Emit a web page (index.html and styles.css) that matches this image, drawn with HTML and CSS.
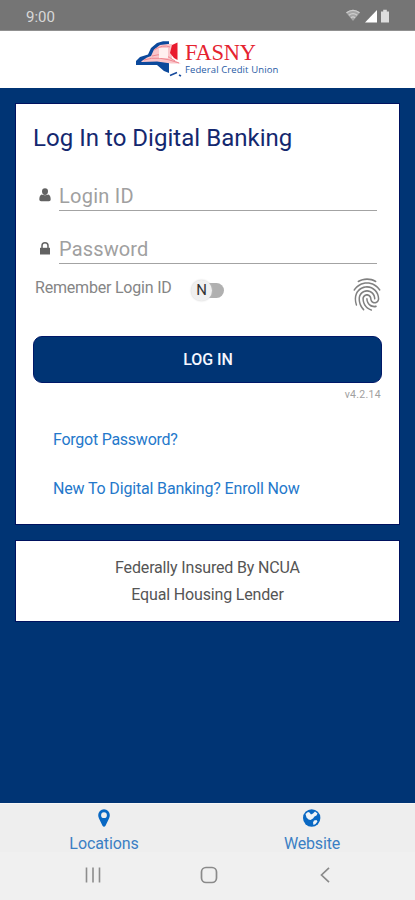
FILE: index.html
```html
<!DOCTYPE html>
<html lang="en">
<head>
<meta charset="utf-8">
<title>FASNY Federal Credit Union</title>
<link rel="stylesheet" href="styles.css">
</head>
<body>
<div class="status">
  <span class="time">9:00</span>
  <svg class="status-icons" width="48" height="16" viewBox="0 0 48 16">
    <path d="M1 4.500Q8 -1 15 4.500L8 13Z" fill="#a5a5a5"/>
    <path d="M1.500 4.800Q8 -.2 14.500 4.800M3.800 7.300Q8 4 12.200 7.300M6 9.700Q8 8.200 10 9.700" fill="none" stroke="#cecece" stroke-width="1.300"/>
    <path d="M20 14.500L32 2V14.500Z" fill="#fff"/>
    <path d="M36 3.500h2.200V1.700h3.600v1.800H44V14.500H36Z" fill="#dedede"/>
  </svg>
</div>
<header class="brand">
  <svg class="state" width="48" height="38" viewBox="0 0 48 38">
    <path d="M1 25V21L5 17L13 14.500L16 8L22 3L28 1.200H34V33L29 31L22 25Z" fill="#0b499c"/>
    <path d="M6 21.500L12 17.500L16 16L19 9.500L25 5L33 4H37V19L46 23.500H36L22 21.500L7 22Z" fill="#fac5ca"/>
    <path d="M9 20Q23 15 44 23M17 16Q29 12 40 21M19 10Q28 4 35 7" stroke="#ef8790" fill="none"/>
    <path d="M24 8h9v10h-9z" fill="#fff0f0"/>
    <path d="M37 5L42.500 2.500V20L39 18L35 13L36 9Z" fill="#e91b2e"/>
    <path d="M35 35.500L42 32.500M44 35L46 36" stroke="#174b9c" stroke-width="1.600" fill="none"/>
  </svg>
  <div class="wordmark"><span class="name">FASNY</span><span class="sub">Federal Credit Union</span></div>
</header>
<main>
  <section class="card login">
    <h1><span>Log In to Digital Banking</span></h1>
    <div class="field">
      <svg width="12" height="14" viewBox="0 0 12 14" fill="#626262"><path d="M6 .3A3 3 0 0 1 9 3.300Q9 7 6 7T3 3.300A3 3 0 0 1 6 .3ZM2.500 6.500Q6 8 9.500 6.500Q11.700 7.500 11.700 11.500Q11.700 13.300 10 13.300H2Q.3 13.300 .3 11.500Q.3 7.500 2.500 6.500Z"/></svg>
      <span class="ph login-ph">Login ID</span>
    </div>
    <div class="field second">
      <svg width="12" height="14" viewBox="0 0 12 14" fill="#626262"><path d="M1 6.800H11V13.500H1Z"/><path d="M3 7V4.800A3 3 0 0 1 9 4.800V7" fill="none" stroke="#626262" stroke-width="1.500"/></svg>
      <span class="ph pass-ph">Password</span>
    </div>
    <div class="remember">
      <span class="remember-text">Remember Login ID</span>
      <span class="toggle"><span class="knob">N</span></span>
      <svg class="finger" width="36" height="39" viewBox="0 0 24 24" preserveAspectRatio="none" fill="#808080"><path d="M17.810 4.470c-.08 0-.16-.02-.23-.06C15.660 3.420 14 3 12.010 3c-1.980 0-3.860.47-5.570 1.410-.24.13-.54.04-.68-.2-.13-.24-.04-.55.2-.68C7.820 2.520 9.860 2 12.010 2c2.130 0 3.990.47 6.030 1.520.25.13.34.43.21.67-.09.18-.26.28-.44.28zM3.500 9.720c-.1 0-.2-.03-.29-.09-.23-.16-.28-.47-.12-.7.99-1.400 2.250-2.500 3.750-3.270C9.980 4.040 14 4.030 17.150 5.650c1.500.77 2.760 1.860 3.750 3.250.16.22.11.54-.12.7-.23.16-.54.11-.7-.12-.9-1.260-2.040-2.250-3.390-2.940-2.870-1.470-6.540-1.470-9.400.01-1.360.7-2.500 1.700-3.400 2.960-.08.14-.23.21-.39.21zm6.250 12.070c-.13 0-.26-.05-.35-.15-.87-.87-1.340-1.430-2.010-2.640-.69-1.230-1.050-2.730-1.050-4.340 0-2.970 2.540-5.390 5.660-5.390s5.660 2.420 5.660 5.390c0 .28-.22.5-.5.5s-.5-.22-.5-.5c0-2.420-2.090-4.390-4.660-4.390-2.570 0-4.660 1.970-4.660 4.390 0 1.440.32 2.770.93 3.850.64 1.150 1.080 1.640 1.850 2.420.19.2.19.51 0 .71-.11.1-.24.15-.37.15zm7.170-1.850c-1.190 0-2.240-.3-3.100-.89-1.490-1.010-2.380-2.650-2.380-4.390 0-.28.22-.5.5-.5s.5.22.5.5c0 1.410.72 2.740 1.940 3.560.71.48 1.540.71 2.540.71.24 0 .64-.03 1.040-.1.27-.05.53.13.58.41.05.27-.13.53-.41.58-.57.11-1.070.12-1.210.12zM14.910 22c-.04 0-.09-.01-.13-.02-1.590-.44-2.630-1.030-3.720-2.100-1.400-1.390-2.170-3.240-2.170-5.220 0-1.620 1.380-2.940 3.080-2.940 1.700 0 3.080 1.320 3.080 2.940 0 1.070.93 1.940 2.080 1.940s2.080-.87 2.080-1.940c0-3.770-3.250-6.830-7.250-6.830-2.840 0-5.440 1.580-6.610 4.030-.39.81-.59 1.760-.59 2.800 0 .78.07 2.010.67 3.610.1.26-.03.55-.29.64-.26.1-.55-.04-.64-.29-.49-1.310-.73-2.610-.73-3.960 0-1.200.23-2.290.68-3.240 1.330-2.790 4.280-4.600 7.510-4.600 4.550 0 8.250 3.510 8.250 7.830 0 1.620-1.380 2.940-3.080 2.940s-3.080-1.320-3.080-2.940c0-1.070-.93-1.940-2.080-1.940s-2.080.87-2.080 1.940c0 1.710.66 3.310 1.870 4.510.95.94 1.860 1.460 3.270 1.850.27.07.42.35.35.61-.05.23-.26.38-.47.38z"/></svg>
    </div>
    <button class="submit">LOG IN</button>
    <div class="version"><span>v4.2.14</span></div>
    <a class="link forgot">Forgot Password?</a>
    <a class="link enroll">New To Digital Banking? Enroll Now</a>
  </section>
  <section class="card legal">
    <div class="ncua">Federally Insured By NCUA</div>
    <div class="ehl">Equal Housing Lender</div>
  </section>
</main>
<footer class="tabs">
  <div class="tab">
    <svg width="20" height="20" viewBox="0 0 20 20"><path fill="#0968c3" fill-rule="evenodd" d="M10 .3A5.800 5.800 0 0 1 15.800 6.100Q15.800 7.800 15 9.500L11.500 16.700Q10 19 8.500 16.700L5 9.500Q4.200 7.800 4.200 6.100A5.800 5.800 0 0 1 10 .3ZM10 3.300A2.900 2.900 0 1 0 10 9.100A2.900 2.900 0 1 0 10 3.300Z"/></svg>
    <span class="loc">Locations</span>
  </div>
  <div class="tab">
    <svg width="20" height="20" viewBox="0 0 20 20"><circle cx="9.700" cy="9" r="8.700" fill="#0968c3"/><path fill="#eef3f8" d="M3.500 5L6 3L7.500 3.500L9 5.500L11 4.500L13 2.500L15.500 4.500L14.500 6.500L12.500 7.500L11 9.500L8.500 11L6.500 10.500L4.500 8.500ZM12 11.500L14.500 11L15.500 12.500L13.500 15L11.500 16L11 13.500Z"/></svg>
    <span class="web">Website</span>
  </div>
</footer>
<nav class="sysnav">
  <svg width="18" height="18" viewBox="0 0 18 18"><path d="M2.500 1.500V16.500M9 1.500V16.500M15.500 1.500V16.500" stroke="#8d8d8d" stroke-width="1.600"/></svg>
  <svg width="18" height="18" viewBox="0 0 18 18"><rect x="1.500" y="1.500" width="15" height="15" rx="4.500" fill="none" stroke="#8a8a8a" stroke-width="1.700"/></svg>
  <svg width="18" height="18" viewBox="0 0 18 18"><path d="M13 1.800L5.500 9L13 16.200" fill="none" stroke="#8a8a8a" stroke-width="1.700"/></svg>
</nav>
</body>
</html>
```
FILE: styles.css
```css
* { box-sizing: border-box; }
body {
  margin: 0;
  width: 415px;
  height: 900px;
  display: flex;
  flex-direction: column;
  overflow: hidden;
  background: #003474;
  font-family: Roboto, "Liberation Sans", sans-serif;
}
svg { display: block; flex: none; }
span, a, div { white-space: nowrap; }
.status {
  height: 31px;
  flex: none;
  background: #757575;
  border-bottom: 1px solid #909090;
  display: flex;
  justify-content: space-between;
  padding: 8px 22px 0 26px;
}
.time { color: #d8d8d8; font-size: 15px; line-height: 18px; }
.brand {
  height: 57px;
  flex: none;
  background: #fff;
  display: flex;
  padding: 9px 0 0 135px;
}
.wordmark { display: flex; flex-direction: column; padding: 1px 0 0 2px; }
.name {
  font-family: "Liberation Serif", serif;
  color: #e5232f;
  font-size: 22.5px;
  line-height: 24px;
  height: 22px;
  letter-spacing: -0.3px;
}
.sub {
  font-family: "Open Sans", sans-serif;
  font-size: 9.5px;
  line-height: 13px;
  color: #285ba5;
  font-weight: 500;
  letter-spacing: 0.1px;
}
main { flex: 1; padding: 16px 16px 0; }
.card { background: #fff; box-shadow: 0 0 0 1px #00125f; width: 383px; }
.login { height: 420px; padding: 18px 17px 0 18px; display: flex; flex-direction: column; }
h1 { margin: 0; font-weight: 400; font-size: 24px; line-height: 32px; color: #14286f; height: 32px; }
h1 span { letter-spacing: 0.03px; margin-left: -1px; }
.field { height: 33px; margin: 24px 5px 0 5px; display: flex; align-items: center; gap: 8px; }
.field.second { margin-top: 20px; }
.ph { flex: 1; height: 33px; line-height: 36px; font-size: 20px; color: #a0a0a0; border-bottom: 1px solid #a3a3a3; }
.login-ph { letter-spacing: 0.25px; }
.pass-ph { letter-spacing: 0.15px; }
.remember { height: 46px; display: flex; padding-left: 1px; }
.remember-text { font-size: 16px; line-height: 20px; margin-top: 14px; color: #858585; width: 159px; letter-spacing: -0.2px; }
.toggle { width: 30px; height: 15px; margin-top: 19px; border-radius: 8px; background: #b0b0b0; }
.knob {
  display: block;
  width: 21px;
  height: 21px;
  margin: -3px 0 0 -3px;
  border-radius: 50%;
  background: #f0f0f0;
  box-shadow: 0 0 2px #ccc;
  color: #333;
  text-align: center;
  line-height: 21px;
  font-size: 15px;
}
.finger { margin: 11px -3px 0 auto; }
.submit {
  height: 47px;
  width: 349px;
  flex: none;
  margin: 26px 0 0 -1px;
  padding: 0 0 0 1px;
  border: 1px solid #001868;
  border-radius: 9px;
  background: #003474;
  color: #f5f7ff;
  font: 500 16px/45px Roboto, sans-serif;
  letter-spacing: -0.1px;
}
.version { text-align: right; font-size: 10.5px; line-height: 14px; color: #a0a0a0; margin-top: 5px; padding-right: 1px; letter-spacing: 0.3px; }
.link { color: #2478cb; font-size: 16px; line-height: 20px; margin-left: 19px; align-self: flex-start; letter-spacing: -0.16px; }
.forgot { margin-top: 28px; letter-spacing: -0.25px; }
.enroll { margin-top: 29px; }
.legal { height: 80px; margin-top: 17px; padding-top: 13px; text-align: center; font-size: 16px; line-height: 27px; color: #555; letter-spacing: -0.16px; }
.tabs { height: 49px; flex: none; background: #eee; display: flex; padding-top: 5px; border-top: 1px solid #f6f6f6; }
.tab { width: 208px; flex: none; display: flex; flex-direction: column; align-items: center; color: #3b7fc4; font-size: 16px; }
.tab span { line-height: 20px; margin-top: 5px; }
.loc { letter-spacing: -0.1px; }
.web { letter-spacing: -0.15px; }
.sysnav { height: 48px; flex: none; background: #f0f0f0; display: flex; justify-content: space-between; padding: 14px 81px 0 84px; }
```
